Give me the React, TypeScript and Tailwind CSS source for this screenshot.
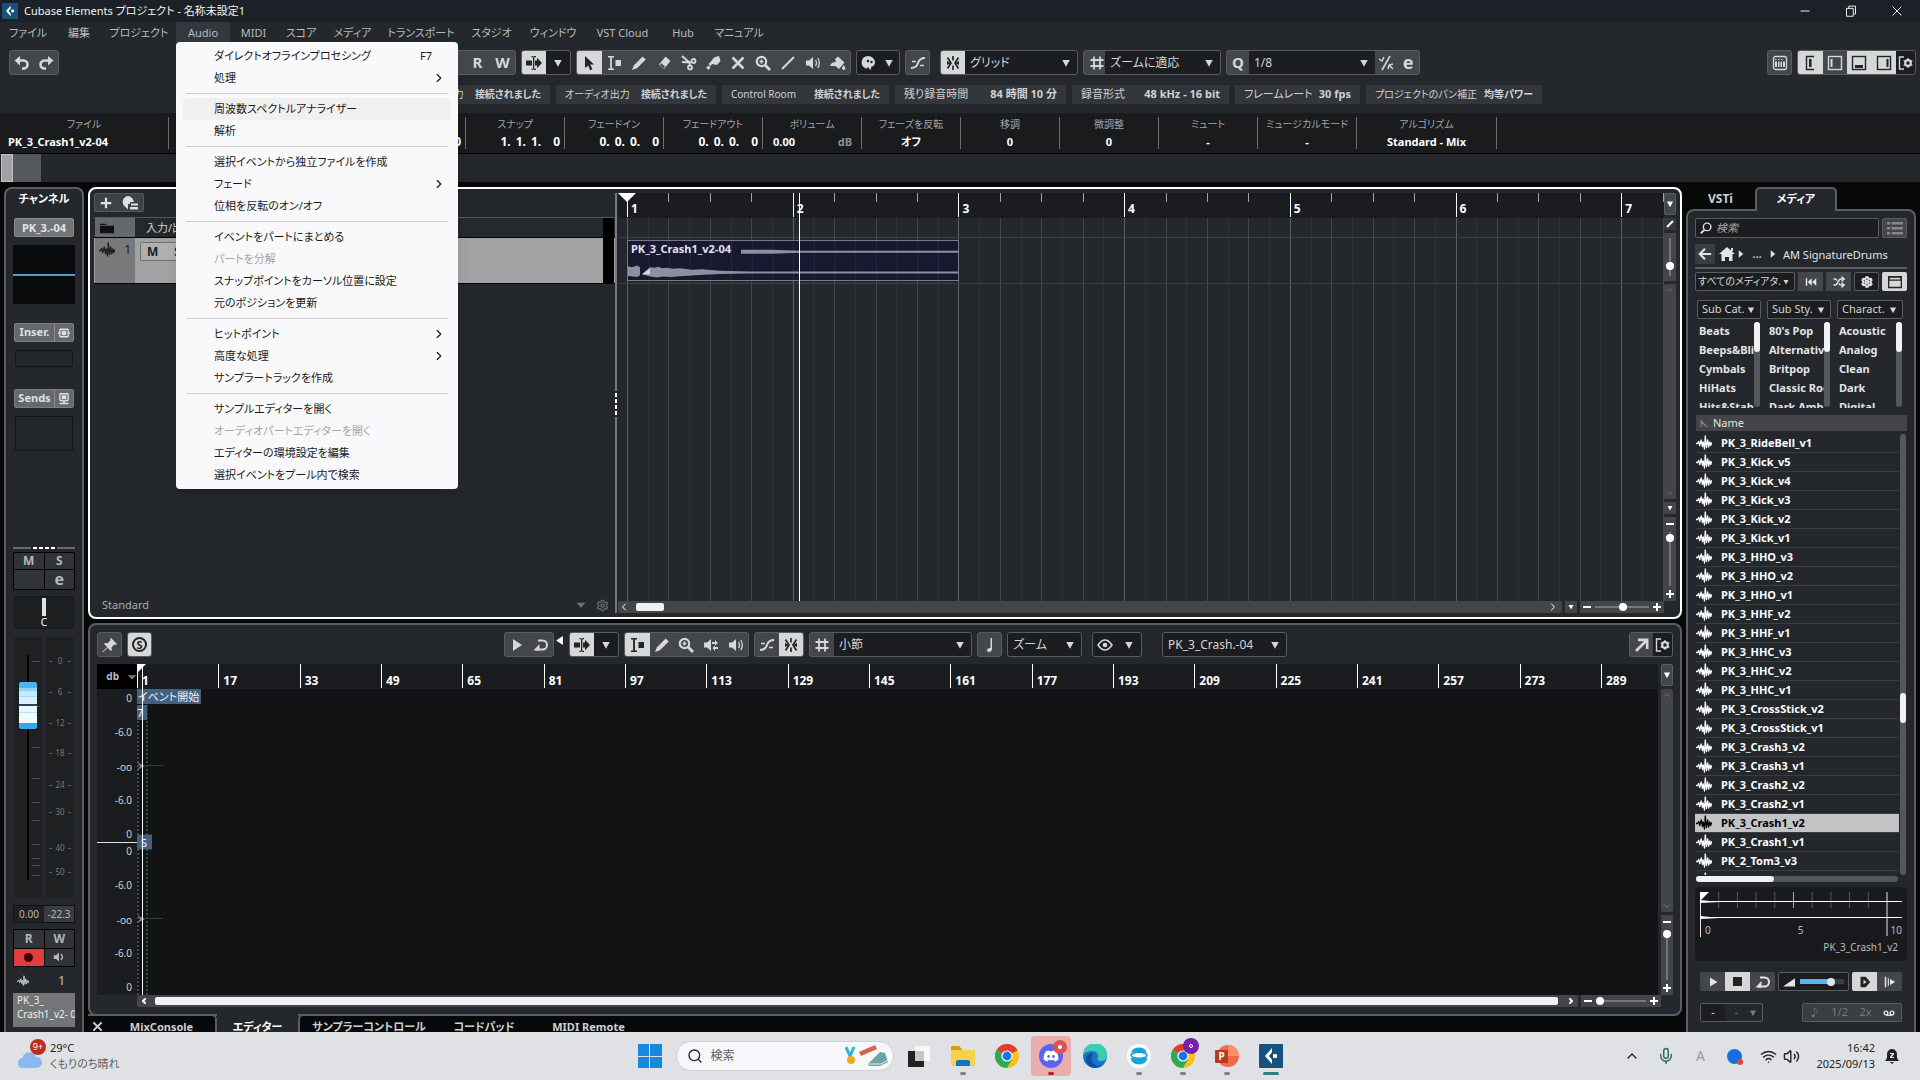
import React, { useState } from "react";
import clsx from "clsx";
import { FaDiscord } from "react-icons/fa6";
import {
  ChevronDown,
  ChevronRight,
  ChevronUp,
  ChevronLeft,
  Mic,
  Search,
  Settings,
  Shuffle,
  Volume2,
  Wifi,
} from "lucide-react";

type Glyph = { d?: string; children?: React.ReactNode; className?: string };

const Icon = ({ d, children, className = "size-4" }: Glyph) => (
  <svg viewBox="0 0 16 16" fill="currentColor" className={clsx("shrink-0", className)} aria-hidden>
    {d && <path d={d} />}
    {children}
  </svg>
);

const stroke = { fill: "none", stroke: "currentColor", strokeWidth: 1.8 };

const DOWN = "M3 4h10L8 13z";
const RANGE = "M2 1h6v1.600H5.900v10.800H8V15H2v-1.600h2.100V2.600H2zM9.500 5H15v6H9.500z";
const PENCIL = "M1 15l1.800-4.600 8.800-9L14.800 4.400 6 13.200z";
const SPEAKER = "M1 5.500h3L8 2v12l-4-3.500H1z";

const Wave = ({ className }: { className?: string }) => (
  <Icon className={className}>
    <path d="M0 8.500h1.500L2.700 6.500l1 4L5.200 5l1.300 6.500L7.200 7l1.300 7L9.300 1l1.200 11.500L11.700 5l1 7 1-5 1 3.500.8-2.500h.5" {...stroke} strokeWidth="1.300" strokeLinejoin="round" />
  </Icon>
);

const icons = {
  undo: <Icon><path d="M4 5.500h5.500a4 4 0 010 8H8" {...stroke} strokeWidth="2.600" /><path d="M.5 5.500L6 1v9.500z" /></Icon>,
  redo: <Icon><path d="M12 5.500H6.500a4 4 0 000 8H8" {...stroke} strokeWidth="2.600" /><path d="M15.500 5.500L10 1v9.500z" /></Icon>,
  autoscroll: <Icon d="M0 5.500h6v5H0zM9 5.500h2V2.800l5 5.200-5 5.200v-2.700H9zM5.500 1H7l.7 1 .7-1H10v1.200H8.300v11.600H10V15H8.400l-.7-1-.7 1H5.500v-1.200H7V2.200H5.500z" />,
  pointer: <Icon d="M4 1l9 8.500H9.200l2.200 4.800-2.200 1-2-4.800L4 13z" />,
  range: <Icon d={RANGE} />,
  pencil: <Icon d={PENCIL} />,
  eraser: <Icon><path d="M9.500 1.500l5 4.500-6.500 8-5-4.500z" /><path d="M5.200 8.200l4 3.500-1.500 1.700-3.600-3.400z" fill="#43464a" /></Icon>,
  scissors: <Icon><path d="M1 1l8 7M1 7l9 .5" {...stroke} strokeWidth="2" /><circle cx="12.500" cy="6" r="2" {...stroke} /><circle cx="9" cy="12.500" r="2" {...stroke} /><path d="M8 6l1 5" {...stroke} /></Icon>,
  glue: <Icon d="M9 2.500l5-1.500 1.500 5-3.500 4-5-1-1.500 2-2-2 2-2zM1 12.500l3-2 1.500 2-2 2.500z" />,
  mute: <Icon><path d="M2.500 2.500l11 11M13.500 2.500l-11 11" {...stroke} strokeWidth="2.600" /></Icon>,
  zoom: <Icon><circle cx="6.500" cy="6.500" r="4.700" {...stroke} strokeWidth="2.200" /><path d="M10 10l5 5" {...stroke} strokeWidth="2.800" /><path d="M6.500 4.500v4M4.500 6.500h4" {...stroke} strokeWidth="1.600" /></Icon>,
  line: <Icon><path d="M2 14L14 2" {...stroke} strokeWidth="2" /></Icon>,
  speaker: <Icon><path d={SPEAKER} /><path d="M10.500 5q2 3 0 6M12.800 3q3 5 0 10" {...stroke} strokeWidth="1.300" /></Icon>,
  scrub: <Icon><path d={SPEAKER} /><path d="M9 5h3V3l3 3-3 2.500V7H9zM15 10h-3V8.500L9.500 11l2.500 3v-2h3z" /></Icon>,
  bucket: <Icon d="M5 4l3-2.500 6.500 6L9 14 5.500 11H0q1-4 6-4zM13.500 10l2 3q0 2-1.700 2T12 13z" />,
  palette: <Icon><path d="M8 1a7 6.500 0 00-2 12.500q2 .5 1.500-2l3 3.500q1-1 .5-3 4-1 4-5A7 6.500 0 008 1z" /><circle cx="8" cy="6" r="1.300" fill="#1b1d20" /><circle cx="11.500" cy="7" r="1.200" fill="#1b1d20" /></Icon>,
  crossfade: <Icon><path d="M1 13q5.500 0 7-5t7-5" {...stroke} strokeWidth="2" /><path d="M2 6.500h4M10 10.500h4" {...stroke} strokeWidth="1.500" /></Icon>,
  snap: <Icon><path d="M8 1v4.500M8 10.500V15M2.500 2.500L6 8l-3.500 5.500M13.500 2.500L10 8l3.500 5.500" {...stroke} strokeWidth="1.700" /><path d="M2 6l4 2-4 2zM14 6l-4 2 4 2z" /></Icon>,
  hash: <Icon><path d="M5 1.500v13M11 1.500v13M1.500 5h13M1.500 11h13" {...stroke} strokeWidth="1.800" /></Icon>,
  quantize: <Icon><path d="M12 1L4 15" {...stroke} strokeWidth="1.600" /><path d="M1 4l3 2 2-4M10 14l1-4 4-1M11 10l4 4" {...stroke} strokeWidth="1.500" /></Icon>,
  keys: <Icon><rect x="1.500" y="1.500" width="13" height="13" rx="2" {...stroke} strokeWidth="1.300" /><path d="M3 4h1.500v1H3zM6 4h1.500v1H6zM9 4h1.500v1H9zM3 6.500h2V12H3zM6 6.500h1.500V12H6zM8.500 6.500H10V12H8.500zM11 6.500h2V12h-2z" /></Icon>,
  gearPanel: <Icon><path d="M6 2H1.500v12H6" {...stroke} strokeWidth="1.400" /><circle cx="10" cy="8" r="3" {...stroke} strokeWidth="1.800" /><path d="M10 3v10M5.600 5.500l8.800 5M5.600 10.500l8.800-5" {...stroke} strokeWidth="1.200" /><circle cx="10" cy="8" r="1.600" fill="#1b1d20" /></Icon>,
  play: <Icon d="M4 2l9 6-9 6z" />,
  loop: <Icon><path d="M5 3.500h4.500a4.500 4.500 0 010 9H3" {...stroke} strokeWidth="2" /><path d="M.5 13.500L6.500 7v6.500z" /></Icon>,
  note: <Icon d="M8.500 1H10v11.500q-.5 2.500-3.200 2.500-2.300-.2-1.800-2.200.8-2 3.500-1.800z" />,
  eye: <Icon><path d="M1 8q3.500-5 7-5t7 5q-3.500 5-7 5T1 8z" {...stroke} strokeWidth="1.500" /><circle cx="8" cy="8" r="2.300" /></Icon>,
  pin: <Icon d="M9 1l6 6-1.500 1-1.200-.4L9.500 10.500 9.800 13l-1 1L5.600 10.700 1 15.300l-.6-.6L5.200 10 2 7l1-1 2.600.2 2.900-2.900L8 2z" />,
  popout: <Icon><path d="M2 14L12 4" {...stroke} strokeWidth="2.600" /><path d="M4 1.500h10.500V12h-2.600V4.200H4z" /></Icon>,
};

/* ---------- small controls ---------- */

const Group = ({ className, children }: { className?: string; children: React.ReactNode }) => (
  <div className={clsx("flex h-[25px] shrink-0 overflow-hidden rounded-[3px] border border-[#5a5d60] bg-[#43464a]", className)}>
    {children}
  </div>
);

const Tool = ({ label, on, dark, className, children }: {
  label: string; on?: boolean; dark?: boolean; className?: string; children: React.ReactNode;
}) => (
  <button
    type="button"
    aria-label={label}
    className={clsx(
      "flex min-w-0 flex-1 items-center justify-center text-[15px] font-bold",
      on ? "bg-[#d6d7d7] text-[#222427]" : dark ? "bg-[#1b1d20] text-[#d6d7d7]" : "text-[#d6d7d7]",
      className,
    )}
  >
    {children}
  </button>
);

const Caret = ({ className = "size-3" }: { className?: string }) => <Icon d={DOWN} className={className} />;

const Drop = ({ label, value, className, small }: {
  label: string; value: string; className?: string; small?: boolean;
}) => (
  <div
    className={clsx(
      "flex min-w-0 items-center overflow-hidden bg-[#1b1d20] text-[#d6d7d7]",
      small ? "h-[19px] rounded-[2px] border border-[#5a5d60] pr-1" : "pr-[5px]",
      className,
    )}
  >
    <select
      aria-label={label}
      className={clsx("min-w-0 flex-1 appearance-none bg-transparent outline-none", small ? "pl-1 text-[11px]" : "pl-[5px] text-xs")}
    >
      <option>{value}</option>
    </select>
    <Caret className={small ? "size-[10px]" : "size-3"} />
  </div>
);

const V_RANGE =
  "min-h-0 w-3 flex-1 appearance-none [writing-mode:vertical-lr] [direction:rtl] bg-[linear-gradient(#75777a,#75777a)] bg-[length:2px_100%] bg-center bg-no-repeat [&::-webkit-slider-thumb]:size-2 [&::-webkit-slider-thumb]:appearance-none [&::-webkit-slider-thumb]:rounded-full [&::-webkit-slider-thumb]:bg-white";
const H_RANGE =
  "h-3 min-w-0 flex-1 appearance-none bg-[linear-gradient(#75777a,#75777a)] bg-[length:100%_2px] bg-center bg-no-repeat [&::-webkit-slider-thumb]:size-2 [&::-webkit-slider-thumb]:appearance-none [&::-webkit-slider-thumb]:rounded-full [&::-webkit-slider-thumb]:bg-white";

const HZoom = ({ label, value, className }: { label: string; value: number; className: string }) => (
  <div className={clsx("flex h-3 shrink-0 items-center gap-1 bg-[#434548] px-[3px] text-white", className)}>
    <button type="button" aria-label="縮小"><Icon className="size-2"><path d="M0 8h16" {...stroke} strokeWidth="4" /></Icon></button>
    <input type="range" aria-label={label} defaultValue={value} className={H_RANGE} />
    <button type="button" aria-label="拡大"><Icon className="size-2"><path d="M0 8h16M8 0v16" {...stroke} strokeWidth="4" /></Icon></button>
  </div>
);

const VZoom = ({ label, value, className }: { label: string; value: number; className: string }) => (
  <div className={clsx("flex w-3 shrink-0 flex-col items-center gap-1 bg-[#434548] py-[3px] text-white", className)}>
    <button type="button" aria-label="縮小"><Icon className="size-2"><path d="M0 8h16" {...stroke} strokeWidth="4" /></Icon></button>
    <input type="range" aria-label={label} defaultValue={value} className={V_RANGE} />
    <button type="button" aria-label="拡大"><Icon className="size-2"><path d="M0 8h16M8 0v16" {...stroke} strokeWidth="4" /></Icon></button>
  </div>
);

const VScroll = () => (
  <div className="flex min-h-0 w-3 flex-1 flex-col items-center justify-between rounded-[2px] bg-[#434548] py-px text-[#77797c]">
    <ChevronUp className="size-[10px]" />
    <ChevronDown className="size-[10px]" />
  </div>
);

/* ---------- header ---------- */

const menuBar = [
  ["ファイル", "w-14"], ["編集", "w-[46px]"], ["プロジェクト", "w-[74px]"], ["Audio", "w-[54px]"],
  ["MIDI", "w-[47px]"], ["スコア", "w-12"], ["メディア", "w-[55px]"], ["トランスポート", "w-[82px]"],
  ["スタジオ", "w-[59px]"], ["ウィンドウ", "w-16"], ["VST Cloud", "w-[75px]"], ["Hub", "w-[46px]"], ["マニュアル", "w-[66px]"],
];

type Entry = { text: string; key?: string; sub?: boolean; off?: boolean; hover?: boolean };

const audioMenu: Entry[][] = [
  [{ text: "ダイレクトオフラインプロセシング", key: "F7" }, { text: "処理", sub: true }],
  [{ text: "周波数スペクトルアナライザー", hover: true }, { text: "解析" }],
  [{ text: "選択イベントから独立ファイルを作成" }, { text: "フェード", sub: true }, { text: "位相を反転のオン/オフ" }],
  [{ text: "イベントをパートにまとめる" }, { text: "パートを分解", off: true }, { text: "スナップポイントをカーソル位置に設定" }, { text: "元のポジションを更新" }],
  [{ text: "ヒットポイント", sub: true }, { text: "高度な処理", sub: true }, { text: "サンプラートラックを作成" }],
  [{ text: "サンプルエディターを開く" }, { text: "オーディオパートエディターを開く", off: true }, { text: "エディターの環境設定を編集" }, { text: "選択イベントをプール内で検索" }],
];

const AudioMenu = () => (
  <div role="menu" className="absolute top-full left-0 z-20 w-[282px] rounded-[4px] bg-[#f9f9fb] py-[3px] text-[11px] text-[#191919] shadow-lg">
    {audioMenu.map((section, i) => (
      <div key={i} className={clsx("mx-[7px]", i > 0 && "mt-1 pt-[4px]")}>
        {i > 0 && <hr className="mx-[3px] -mt-1 mb-1 border-[#cfcfd0]" />}
        {section.map((item) => (
          <button
            key={item.text}
            type="button"
            role="menuitem"
            disabled={item.off}
            className={clsx(
              "flex h-[22px] w-full items-center rounded-[3px] pr-[9px] pl-[31px] text-left whitespace-nowrap",
              item.off && "text-[#a5a5a5]",
              item.hover && "bg-[#f0f0f1]",
            )}
          >
            <span className="flex-1">{item.text}</span>
            {item.key && <span className="pr-[10px]">{item.key}</span>}
            {item.sub && <ChevronRight className="-mr-1 size-[14px]" />}
          </button>
        ))}
      </div>
    ))}
  </div>
);

const CubaseMark = ({ className }: { className: string }) => (
  <svg viewBox="0 0 24 24" className={className} aria-hidden>
    <rect width="24" height="24" rx="1" fill="#17527c" />
    <path d="M13 4L6 12l7 8V15.500L9.800 12 13 8.500z" fill="#fff" />
    <circle cx="16" cy="12" r="2.200" fill="#fff" />
  </svg>
);

const TitleBar = () => (
  <div className="flex h-[22px] items-center bg-[#1b2127] pl-[2px] text-[11px] text-[#f2f2f2]">
    <CubaseMark className="size-4" />
    <h1 className="ml-[6px] flex-1">Cubase Elements プロジェクト - 名称未設定1</h1>
    <button type="button" aria-label="最小化" className="flex w-[46px] justify-center"><Icon className="size-3"><path d="M2 8h12" {...stroke} strokeWidth="1.300" /></Icon></button>
    <button type="button" aria-label="元に戻す" className="flex w-[46px] justify-center"><Icon className="size-3"><path d="M2 4.500h9V15H2zM5 4V1.500h9V12h-2" {...stroke} strokeWidth="1.300" /></Icon></button>
    <button type="button" aria-label="閉じる" className="flex w-[46px] justify-center"><Icon className="size-3"><path d="M2 2l12 12M14 2L2 14" {...stroke} strokeWidth="1.300" /></Icon></button>
  </div>
);

const MenuBar = () => {
  const [open, setOpen] = useState("Audio");
  return (
    <nav className="flex h-5 text-[11px] text-[#b9bbbd]">
      {menuBar.map(([name, width]) => (
        <div key={name} className={clsx("relative", width)}>
          <button
            type="button"
            onClick={() => setOpen(open === name ? "" : name)}
            className={clsx("h-full w-full pt-[2px] text-center whitespace-nowrap", open === name && "bg-[#34373d]")}
          >
            {name}
          </button>
          {open === name && name === "Audio" && <AudioMenu />}
        </div>
      ))}
    </nav>
  );
};

const ZoneIcon = ({ d }: { d: string }) => (
  <Icon><rect x="1.500" y="1.500" width="13" height="13" fill="none" stroke="currentColor" strokeWidth="1.400" /><path d={d} /></Icon>
);

const Toolbar = () => (
  <div className="mt-2 flex gap-[5px] pr-1 pl-[9px]">
    <Group className="w-[50px]">
      <Tool label="元に戻す">{icons.undo}</Tool>
      <Tool label="再実行">{icons.redo}</Tool>
    </Group>
    <Group className="ml-[372px] w-20 pl-7">
      <Tool label="Read">R</Tool>
      <Tool label="Write">W</Tool>
    </Group>
    <Group className="w-[50px]">
      <Tool label="自動スクロール" on>{icons.autoscroll}</Tool>
      <Tool label="自動スクロール設定" dark><Caret /></Tool>
    </Group>
    <Group className="w-[275px]">
      <Tool label="オブジェクトの選択" on>{icons.pointer}</Tool>
      <Tool label="範囲選択">{icons.range}</Tool>
      <Tool label="鉛筆">{icons.pencil}</Tool>
      <Tool label="消しゴム">{icons.eraser}</Tool>
      <Tool label="はさみ">{icons.scissors}</Tool>
      <Tool label="のり">{icons.glue}</Tool>
      <Tool label="ミュート">{icons.mute}</Tool>
      <Tool label="ズーム">{icons.zoom}</Tool>
      <Tool label="ライン">{icons.line}</Tool>
      <Tool label="再生">{icons.speaker}</Tool>
      <Tool label="カラー">{icons.bucket}</Tool>
    </Group>
    <Group className="w-11">
      <Tool label="カラーメニュー" dark>{icons.palette}</Tool>
      <Tool label="カラー設定" dark><Caret /></Tool>
    </Group>
    <Group className="w-[25px]"><Tool label="クロスフェード">{icons.crossfade}</Tool></Group>
    <Group className="ml-[5px] w-[138px]">
      <Tool label="スナップ" on className="max-w-6">{icons.snap}</Tool>
      <Drop label="スナップタイプ" value="グリッド" className="flex-1" />
    </Group>
    <Group className="w-[138px] bg-[#1b1d20] pl-[5px] text-[#d6d7d7]">
      <span className="flex items-center">{icons.hash}</span>
      <Drop label="グリッドタイプ" value="ズームに適応" className="flex-1" />
    </Group>
    <Group className="w-[194px]">
      <Tool label="クオンタイズ" className="max-w-6">Q</Tool>
      <Drop label="クオンタイズ値" value="1/8" className="w-[126px]" />
      <Tool label="連符">{icons.quantize}</Tool>
      <Tool label="クオンタイズパネル"><span className="pb-[2px] text-lg leading-none">e</span></Tool>
    </Group>
    <Group className="ml-auto w-[25px]"><Tool label="オンスクリーンキーボード">{icons.keys}</Tool></Group>
    <Group className="w-[119px]">
      <Tool label="インスペクター" on>
        <Icon><path d="M12 1.500H4.500v13H12" fill="none" stroke="currentColor" strokeWidth="1.400" /><path d="M7 4h2.500v8H7z" /></Icon>
      </Tool>
      <Tool label="左ゾーン"><ZoneIcon d="M3.500 4h2v8h-2z" /></Tool>
      <Tool label="下ゾーン" on><ZoneIcon d="M4 10h8v3H4z" /></Tool>
      <Tool label="右ゾーン" on><ZoneIcon d="M10.500 4h2v8h-2z" /></Tool>
      <Tool label="ウィンドウレイアウト" dark className="max-w-[19px]">{icons.gearPanel}</Tool>
    </Group>
  </div>
);

const status = [
  ["オーディオ入力", "接続されました", "w-40 text-[10px]"],
  ["オーディオ出力", "接続されました", "w-40 text-[10px]"],
  ["Control Room", "接続されました", "w-[167px] text-[10px]"],
  ["残り録音時間", "84 時間 10 分", "w-[171px] text-[11px]"],
  ["録音形式", "48 kHz - 16 bit", "w-[157px] text-[11px]"],
  ["フレームレート", "30 fps", "w-[125px] text-[11px]"],
  ["プロジェクトのパン補正", "均等パワー", "w-44 text-[10px]"],
];

const StatusLine = () => (
  <div className="mt-[10px] flex gap-[6px] pl-[390px] text-[#d0d1d2]">
    {status.map(([label, value, size]) => (
      <button key={label} type="button" className={clsx("flex h-[19px] items-center justify-between bg-[#33363a] px-[9px] whitespace-nowrap", size)}>
        <span>{label}</span>
        <span className="font-bold">{value}</span>
      </button>
    ))}
  </div>
);

const infoFields = [
  ["開始", "1. 1. 1. 0"], ["終了", "3. 1. 1. 0"], ["長さ", "2. 0. 0. 0"], ["スナップ", "1. 1. 1. 0"],
  ["フェードイン", "0. 0. 0. 0"], ["フェードアウト", "0. 0. 0. 0"], ["ボリューム", "0.00"],
  ["フェーズを反転", "オフ"], ["移調", "0"], ["微調整", "0"], ["ミュート", "-"], ["ミュージカルモード", "-"],
];

const Position = ({ value }: { value: string }) => (
  <span className="flex justify-end gap-[5px] pr-1 text-xs leading-5">
    {value.split(" ").map((part, i) => <span key={i} className={i === 3 ? "pl-[7px]" : undefined}>{part}</span>)}
  </span>
);

const InfoLine = () => (
  <div className="mt-[9px] flex h-[41px] border-b border-black bg-[#191b1d] py-1 text-[11px] text-white">
    <dl className="flex w-[169px] flex-col border-r border-[#6c6e70] text-center">
      <dt className="text-[10px] leading-[15px] text-[#a2a4a6]">ファイル</dt>
      <dd className="pl-2 text-left leading-5 font-bold">PK_3_Crash1_v2-04</dd>
    </dl>
    {infoFields.map(([label, value]) => (
      <dl key={label} className="flex w-[99px] flex-col border-r border-[#6c6e70] text-center">
        <dt className="text-[10px] leading-[15px] text-[#a2a4a6]">{label}</dt>
        <dd className="leading-5 font-bold">
          {label === "ボリューム" ? (
            <span className="flex justify-between pr-[9px] pl-[10px]">{value}<span className="text-[#8f9193]">dB</span></span>
          ) : value.includes(". ") ? <Position value={value} /> : value}
        </dd>
      </dl>
    ))}
    <dl className="flex w-[140px] flex-col border-r border-[#6c6e70] text-center">
      <dt className="text-[10px] leading-[15px] text-[#a2a4a6]">アルゴリズム</dt>
      <dd className="leading-5 font-bold">Standard - Mix</dd>
    </dl>
  </div>
);

/* ---------- channel strip ---------- */

const meterMarks: [string, number][] = [["0", 24], ["6", 55], ["12", 86], ["18", 116], ["24", 148], ["30", 175], ["40", 211], ["50", 235]];
const faderTicks = [24, 69, 110, 141, 165, 183, 207, 221, 228, 238];

const StripHead = ({ text, children }: { text: string; children: React.ReactNode }) => (
  <button type="button" className="mx-px flex h-[19px] items-center rounded-[2px] border border-[#7c7e80] bg-[#66696c] text-[11px] font-bold text-[#dfe0e0]">
    <span className="flex-1">{text}</span>
    <span className="flex h-full w-[19px] items-center justify-center border-l border-[#8a8c8e]">{children}</span>
  </button>
);

const ChannelStrip = () => (
  <aside className="flex w-20 shrink-0 flex-col rounded-t-lg border-2 border-b-0 border-[#5b5e61] bg-[#24272b] px-[7px]">
    <h2 className="h-5 text-center text-[11px] leading-5 font-bold text-white">チャンネル</h2>
    <button type="button" className="mx-px mt-[9px] h-[19px] rounded-[2px] border border-[#8a8c8e] bg-[#717476] text-[11px] leading-none font-bold text-[#e4e5e5]">PK_3.-04</button>
    <div className="mt-2 flex h-[59px] flex-col justify-center bg-[#090a0b]"><div className="h-[2px] bg-[#4f9ccb]" /></div>
    <div className="h-[19px]" />
    <StripHead text="Inser."><Icon className="size-3"><rect x="2.500" y="3" width="11" height="10" rx="1" {...stroke} /><path d="M5 5h6v6H5zM0 7h2v2H0zM14 7h2v2h-2z" /></Icon></StripHead>
    <div className="mx-[2px] mt-2 mb-[22px] h-[17px] rounded-[2px] border border-[#131416]" />
    <StripHead text="Sends"><Icon className="size-3"><rect x="2.500" y="1" width="11" height="9" rx="1" {...stroke} /><path d="M5 3h6v5H5zM7 10h2v4H7zM2 13h12v2H2z" /></Icon></StripHead>
    <div className="mx-[2px] mt-2 h-[35px] rounded-[2px] border border-[#131416]" />
    <div className="min-h-4 flex-1" />
    <div className="flex h-[2px] items-center gap-[2px]">
      <i className="h-[2px] flex-1 bg-[#67696c]" /><i className="h-[2px] w-1 bg-white" /><i className="h-[2px] w-1 bg-white" /><i className="h-[2px] w-1 bg-white" /><i className="h-[2px] w-1 bg-white" /><i className="h-[2px] flex-1 bg-[#67696c]" />
    </div>
    <div className="mt-[3px] grid h-[38px] grid-cols-2 gap-px border border-black bg-black text-xs font-bold text-[#b5b7b9] *:bg-[#303337]">
      <button type="button" className="leading-none">M</button>
      <button type="button" className="leading-none">S</button>
      <button type="button" aria-label="バイパス" />
      <button type="button" className="text-base leading-none">e</button>
    </div>
    <div className="mx-px mt-[6px] flex h-[33px] flex-col items-center rounded-[3px] border border-[#17181a] bg-[#1d1f20] pt-px text-[10px] leading-[10px] text-white">
      <i className="mb-px h-[18px] w-1 bg-[#dfe0e0]" />C
    </div>
    <div className="mx-px mt-2 flex h-[261px] gap-1">
      <div className="relative flex w-7 justify-center rounded-[3px] bg-[#1e2021] py-[18px]">
        {faderTicks.map((y) => <i key={y} className="absolute right-[2px] h-px w-2 bg-[#4c4e50]" style={{ top: y }} />)}
        <input
          type="range"
          aria-label="ボリューム"
          defaultValue={85}
          className="relative h-full w-[18px] appearance-none bg-[linear-gradient(#050505,#050505)] bg-[length:2px_100%] bg-center bg-no-repeat [direction:rtl] [writing-mode:vertical-lr] [&::-webkit-slider-thumb]:h-[47px] [&::-webkit-slider-thumb]:w-[18px] [&::-webkit-slider-thumb]:appearance-none [&::-webkit-slider-thumb]:rounded-[2px] [&::-webkit-slider-thumb]:bg-[linear-gradient(#4cb4f0_0_6px,#8fd3f7_6px_9px,#c9eafb_9px_14px,#a7dcf7_14px_15px,#d9f1fc_15px_22px,#2b4658_22px_24px,#e9f7fe_24px_30px,#b5e2f9_30px_31px,#f1faff_31px_41px,#35a8ec_41px)]"
        />
      </div>
      <div className="relative w-7 rounded-[3px] bg-[#1e2021] text-center text-[8px] text-[#77797b]">
        {meterMarks.map(([n, y]) => (
          <span key={n} className="absolute inset-x-[3px] flex h-3 -translate-y-1/2 items-center justify-between" style={{ top: y }}>
            <i className="h-px w-[3px] bg-[#5b5d60]" />{n}<i className="h-px w-[3px] bg-[#5b5d60]" />
          </span>
        ))}
      </div>
    </div>
    <div className="mt-[7px] grid h-[18px] grid-cols-2 border border-[#111] text-center text-[10px] leading-4 text-[#b5b7b9]">
      <span className="bg-[#1e2021]">0.00</span><span className="bg-[#3a3d40]">-22.3</span>
    </div>
    <div className="mt-[6px] grid h-[38px] grid-cols-2 gap-px border border-black bg-black text-xs font-bold text-[#b5b7b9] *:bg-[#303337]">
      <button type="button" className="leading-none">R</button>
      <button type="button" className="leading-none">W</button>
      <button type="button" aria-label="録音可能" className="flex items-center justify-center bg-[#e23d3d]!"><i className="size-[9px] rounded-full bg-[#3a0505]" /></button>
      <button type="button" aria-label="モニタリング" className="flex items-center justify-center"><Icon className="size-3"><path d={SPEAKER} /><path d="M10.500 4q4 4 0 8" {...stroke} /></Icon></button>
    </div>
    <div className="mt-1 flex h-[19px] items-center justify-between px-1 pr-[10px] text-xs text-[#c4c5c7]">
      <Wave className="size-3" />1
    </div>
    <div className="mt-[3px] mb-[5px] h-[34px] overflow-hidden bg-[#737577] pl-1 text-[10px] leading-[14px] whitespace-nowrap text-[#eee]">
      PK_3_<br />Crash1_v2- 04
    </div>
  </aside>
);

/* ---------- project zone ---------- */

const BAR = 165.7;
const eighths = Array.from({ length: 51 }, (_, i) => i);

const TrackList = () => (
  <section className="flex w-[521px] shrink-0 flex-col">
    <div className="flex h-[25px] items-start border-b border-[#55585a]">
      <div className="flex h-[19px] w-[50px] items-center justify-around rounded-[2px] border border-[#55585b] bg-[#3e4145] text-[#dfe0e0]">
        <button type="button" aria-label="トラックを追加"><Icon className="size-3"><path d="M8 1v14M1 8h14" {...stroke} strokeWidth="3" /></Icon></button>
        <button type="button" aria-label="トラックプリセット"><Icon d="M6 1a6 6 0 014.500 2.500L12 7H8v2H6v5.500L3.500 12A6 6 0 016 1zM9 8.500h7v2H9zM8 12h8v2.500H8z" /></button>
      </div>
    </div>
    <div className="flex h-5 border-b border-black bg-[#25282c] pl-px text-[11px] text-[#d0d1d2]">
      <div className="flex w-10 items-center bg-[#66696c] pl-1 text-[#111]"><Icon d="M0 3h7v1.500H0zM0 5.500h16V14H0z" className="h-[14px] w-4" /></div>
      <span className="flex-1 pl-[11px] leading-[19px]">入力/出力チャンネル</span>
      <i className="mr-px w-[11px] bg-black" />
    </div>
    <div className="flex h-[46px] border-b border-black bg-[#a0a2a4] pl-px text-[#1b1d1f]">
      <div className="flex w-10 justify-between bg-[#77797b] pt-1 pr-1 pl-1"><Wave /><span className="text-xs leading-4">1</span></div>
      <div className="mt-1 ml-[5px] flex h-[19px] w-20 items-center gap-4 rounded-[2px] border border-[#6d6f71] bg-[#aeb0b1] px-[6px] text-xs font-bold">
        <button type="button">M</button>
        <button type="button">S</button>
      </div>
      <i className="mr-px ml-auto w-[11px] bg-black" />
    </div>
    <div className="flex-1" />
    <div className="flex h-4 items-center pr-[6px] pl-2 text-[11px] text-[#a9abad]">
      <span className="flex-1">Standard</span>
      <Icon d="M2 5h12l-6 7z" className="mr-[9px] size-3 text-[#6c6e71]" />
      <Settings className="size-[13px]" strokeWidth={2.5} color="#6c6e71" />
    </div>
  </section>
);

const Clip = () => (
  <div className="absolute top-[22px] left-[9px] h-[41px] w-[332px] overflow-hidden border border-[#77788a] bg-[#18182e] pl-[3px] text-[11px] leading-[15px] font-bold text-[#e6e4f4]">
    <svg viewBox="0 0 330 40" preserveAspectRatio="none" className="absolute inset-0 size-full" fill="#8f8f9d">
      {Array.from({ length: 15 }, (_, i) => <path key={i} d={`M${(i + 1) * 20.7} 0v40`} stroke="#262750" />)}
      <path d="M113 9h30l30 1h157v2H173l-30 1h-30z" />
      <path d="M0 26l4 1 5-2 3 2v8l-3 2-9-1zM14 34l8-7 5 .5 3-1 4 1.500 5-.5 6 1 7-.5 12 1.500 10-.5 18 1.500 30 .8h210v2H120l-28 .6-20 1-17 1-12 1-8-.5-6 1-7-1z" />
      <path d="M14 34L22 28v6z" fill="#d6d5e2" />
    </svg>
    <span className="relative">PK_3_Crash1_v2-04</span>
  </div>
);

const Arrange = () => (
  <section className="flex min-w-0 flex-1 flex-col">
    <div className="flex min-h-0 flex-1">
      <div className="relative flex min-w-0 flex-1 flex-col overflow-hidden">
        <div className="relative h-[25px] shrink-0 bg-[#1b1c1f] text-xs font-bold text-white">
          {eighths.filter((i) => i % 2 === 0).map((i) => (
            <React.Fragment key={i}>
              <i className={clsx("absolute top-0 w-px", i % 8 === 0 ? "h-6 bg-white" : "h-[9px] bg-[#a0a1a3]")} style={{ left: 9 + (i * BAR) / 8 }} />
              {i % 8 === 0 && <span className="absolute bottom-px leading-4" style={{ left: 13 + (i * BAR) / 8 }}>{i / 8 + 1}</span>}
            </React.Fragment>
          ))}
          <svg viewBox="0 0 18 9" className="absolute top-0 left-0 h-[9px] w-[18px]"><path d="M0 0h18L9 9z" fill="#fff" /></svg>
        </div>
        <div className="relative flex-1 bg-[#24272b]">
          {eighths.map((i) => (
            <i key={i} className={clsx("absolute inset-y-0 w-px", i % 8 === 0 ? "bg-[#5d6062]" : i % 2 === 0 ? "bg-[#45484b]" : "bg-[#303336]")} style={{ left: 9 + (i * BAR) / 8 }} />
          ))}
          <i className="absolute inset-x-0 top-[19px] h-px bg-[#3d4043]" />
          <i className="absolute inset-x-0 top-[65px] h-px bg-[#3d4043]" />
          <Clip />
        </div>
        <i className="absolute inset-y-0 left-[181px] w-px bg-white" />
      </div>
      <div className="flex w-3 shrink-0 flex-col gap-[3px] text-white">
        <button type="button" aria-label="ルーラー表示" className="flex h-[22px] shrink-0 items-center justify-center rounded-[2px] border border-[#5a5d60] bg-[#43464a]"><Caret className="size-[10px]" /></button>
        <button type="button" aria-label="編集" className="flex h-3 shrink-0 items-center justify-center bg-[#36393c]"><Icon className="size-2"><path d="M2 14L14 2" {...stroke} strokeWidth="4" /></Icon></button>
        <div className="flex h-12 shrink-0 flex-col bg-[#434548] py-[5px]"><input type="range" aria-label="波形ズーム" defaultValue={20} className={V_RANGE} /></div>
        <VScroll />
        <button type="button" aria-label="縦ズームプリセット" className="flex h-3 shrink-0 items-center justify-center bg-[#434548]"><Caret className="size-2" /></button>
        <VZoom label="縦ズーム" value={96} className="h-[84px]" />
      </div>
    </div>
    <div className="flex h-3 gap-[3px] pr-3 text-white">
      <div className="flex min-w-0 flex-1 items-center rounded-[2px] bg-[#434548]">
        <ChevronLeft className="size-3" />
        <i className="ml-[6px] h-2 w-7 rounded-[2px] bg-[#f0f1f2]" />
        <ChevronRight className="mr-[3px] ml-auto size-3" />
      </div>
      <button type="button" aria-label="横ズームプリセット" className="flex w-3 items-center justify-center bg-[#434548]"><Caret className="size-2" /></button>
      <HZoom label="横ズーム" value={52} className="w-[84px]" />
    </div>
  </section>
);

/* ---------- sample editor ---------- */

const dbScale: [string, number][] = [["0", 9], ["-6.0", 43], ["-oo", 78], ["-6.0", 111], ["0", 145], ["0", 162], ["-6.0", 196], ["-oo", 231], ["-6.0", 264], ["0", 298]];
const editorBars = Array.from({ length: 19 }, (_, i) => i);

const Editor = () => (
  <section className="flex min-h-0 flex-1 flex-col gap-[7px] rounded-lg border-2 border-[#5b5e61] bg-[#24272b] p-[7px]">
    <div className="flex gap-[5px]">
      <Group className="w-[25px]"><Tool label="固定">{icons.pin}</Tool></Group>
      <Group className="w-[25px]">
        <Tool label="ソロ" on><span className="flex size-[15px] items-center justify-center rounded-full border-2 border-[#222427] text-[11px] leading-none">S</span></Tool>
      </Group>
      <Group className="ml-[347px] w-[50px]"><Tool label="試聴">{icons.play}</Tool><Tool label="ループ">{icons.loop}</Tool></Group>
      <Icon d="M14 0v16L2 8z" className="mt-1 -ml-1 size-[9px] self-start text-white" />
      <Group className="w-[50px]"><Tool label="自動スクロール" on>{icons.autoscroll}</Tool><Tool label="自動スクロール設定" dark><Caret /></Tool></Group>
      <Group className="w-[125px]">
        <Tool label="範囲選択" on>{icons.range}</Tool>
        <Tool label="波形の描画">{icons.pencil}</Tool>
        <Tool label="ズーム">{icons.zoom}</Tool>
        <Tool label="スクラブ">{icons.scrub}</Tool>
        <Tool label="再生">{icons.speaker}</Tool>
      </Group>
      <Group className="w-[50px]"><Tool label="ゼロクロス">{icons.crossfade}</Tool><Tool label="スナップ" on>{icons.snap}</Tool></Group>
      <Group className="w-[163px]">
        <Tool label="グリッド" className="max-w-6">{icons.hash}</Tool>
        <Drop label="グリッド間隔" value="小節" className="flex-1" />
      </Group>
      <Group className="w-[25px]"><Tool label="音符">{icons.note}</Tool></Group>
      <Group className="w-[75px]"><Drop label="ズーム" value="ズーム" className="flex-1" /></Group>
      <Group className="ml-[5px] w-[50px]"><Tool label="表示" dark>{icons.eye}</Tool><Tool label="表示設定" dark><Caret /></Tool></Group>
      <Group className="ml-[15px] w-[125px]"><Drop label="編集中のイベント" value="PK_3_Crash.-04" className="flex-1" /></Group>
      <Group className="ml-auto w-11"><Tool label="別ウィンドウで開く">{icons.popout}</Tool><Tool label="設定" dark className="max-w-[19px]">{icons.gearPanel}</Tool></Group>
    </div>
    <div className="flex min-h-0 flex-1">
      <div className="flex min-w-0 flex-1 flex-col">
        <div className="flex min-h-0 flex-1 pr-[3px]">
          <div className="flex w-10 shrink-0 flex-col">
            <div className="flex h-[25px] shrink-0 items-center justify-end gap-2 bg-black text-[10px] font-bold text-[#b9b9d0]">db <Icon d="M1 5h14l-7 7z" className="size-[10px] text-[#77797c]" /></div>
            <div className="relative flex-1 bg-[#1a1c1f] text-[10px] leading-3 text-[#cfd0d2]">
              {dbScale.map(([t, y]) => <span key={y} className="absolute right-[5px] -translate-y-1/2" style={{ top: y }}>{t}</span>)}
              <i className="absolute inset-x-0 top-1/2 h-px bg-[#e3e3e4]" />
            </div>
          </div>
          <div className="relative flex min-w-0 flex-1 flex-col overflow-hidden">
            <div className="relative h-[25px] shrink-0 bg-[#1b1c1f] text-xs font-bold text-white">
              {editorBars.map((i) => (
                <React.Fragment key={i}>
                  <i className="absolute top-0 h-6 w-px bg-white" style={{ left: i * 81.33 }} />
                  <span className="absolute bottom-0 leading-4" style={{ left: 5 + i * 81.33 }}>{i * 16 + 1}</span>
                </React.Fragment>
              ))}
              <svg viewBox="0 0 9 9" className="absolute top-0 left-0 size-[9px]"><path d="M0 0h9L0 9z" fill="#fff" /></svg>
            </div>
            <div className="relative flex-1 bg-[#121315] text-[11px] leading-[15px] text-[#eef2f8]">
              <i className="absolute inset-y-0 left-0 border-l-2 border-dotted border-[#464a58]" />
              <i className="absolute inset-y-0 left-[9px] border-l-2 border-dotted border-[#34483f]" />
              {["top-1/4", "top-3/4"].map((pos) => (
                <div key={pos} className={clsx("absolute left-0 flex w-[26px] -translate-y-1/2 items-center text-[#77797c]", pos)}>
                  <Icon d="M0 0l16 8L0 16l6-8z" className="size-2" /><i className="h-px flex-1 bg-[#3a3c3f]" />
                </div>
              ))}
              <span className="absolute top-0 left-0 w-16 bg-[#43607f] pl-px whitespace-nowrap">イベント開始</span>
              <span className="absolute top-4 left-0 w-[10px] bg-[#43607f]">7</span>
              <span className="absolute top-1/2 left-0 w-[15px] -translate-y-1/2 bg-[#43607f] pl-1">S</span>
            </div>
            <i className="absolute inset-y-0 left-[5px] w-px bg-white" />
          </div>
        </div>
        <div className="flex h-3 gap-[3px] pl-10 text-white">
          <div className="flex min-w-0 flex-1 items-center rounded-[2px] bg-[#434548] px-[3px]">
            <ChevronLeft className="size-2" strokeWidth={6} />
            <i className="mr-[9px] ml-[7px] h-2 flex-1 rounded-[2px] bg-[#f0f1f2]" />
            <ChevronRight className="size-2" strokeWidth={6} />
          </div>
          <HZoom label="エディター横ズーム" value={0} className="w-20" />
        </div>
      </div>
      <div className="mb-3 flex w-3 shrink-0 flex-col gap-[3px] text-white">
        <button type="button" aria-label="ルーラー形式" className="flex h-[22px] shrink-0 items-center justify-center rounded-[2px] border border-[#5a5d60] bg-[#43464a]"><Caret className="size-[10px]" /></button>
        <VScroll />
        <VZoom label="エディター縦ズーム" value={100} className="h-20" />
      </div>
    </div>
  </section>
);

const ZoneTabs = () => (
  <div role="tablist" className="relative -mt-[2px] flex h-[18px] shrink-0 overflow-hidden text-[11px] leading-[22px] font-bold whitespace-nowrap text-[#cfd0d1] *:shrink-0">
    <button type="button" aria-label="ゾーンを閉じる" className="flex w-6 items-center border-t-2 border-[#5b5e61] bg-[#08090a] pt-1 pl-1"><Icon className="size-[11px]"><path d="M2 2l12 12M14 2L2 14" {...stroke} strokeWidth="3" /></Icon></button>
    <button type="button" role="tab" className="h-6 w-[105px] rounded-tr-[5px] border-t-2 border-r-2 border-[#5b5e61] bg-[#08090a] pr-1">MixConsole</button>
    <button type="button" role="tab" aria-selected className="h-6 w-[81px] bg-[#24272b] pt-[2px] text-white">エディター</button>
    <button type="button" role="tab" className="h-6 w-[140px] rounded-tl-[5px] border-t-2 border-l-2 border-[#5b5e61] bg-[#08090a]">サンプラーコントロール</button>
    <button type="button" role="tab" className="h-6 w-[92px] pt-[2px]">コードパッド</button>
    <button type="button" role="tab" className="h-6 w-[117px] pt-[2px]">MIDI Remote</button>
  </div>
);

/* ---------- right zone ---------- */

const filters = [
  { name: "Sub Cat.", width: "w-16", items: ["Beats", "Beeps&Bli", "Cymbals", "HiHats", "Hits&Stabs"] },
  { name: "Sub Sty.", width: "w-16", items: ["80's Pop", "Alternative", "Britpop", "Classic Rock", "Dark Ambient"] },
  { name: "Charact.", width: "w-[66px]", items: ["Acoustic", "Analog", "Clean", "Dark", "Digital"] },
];

const files = [
  "RideBell_v1", "Kick_v5", "Kick_v4", "Kick_v3", "Kick_v2", "Kick_v1", "HHO_v3", "HHO_v2", "HHO_v1", "HHF_v2", "HHF_v1",
  "HHC_v3", "HHC_v2", "HHC_v1", "CrossStick_v2", "CrossStick_v1", "Crash3_v2", "Crash3_v1", "Crash2_v2", "Crash2_v1",
  "Crash1_v2", "Crash1_v1",
].map((n) => `PK_3_${n}`).concat("PK_2_Tom3_v3", "PK_2_Tom3_v2");

const SmallBtn = ({ label, className, children }: { label: string; className?: string; children: React.ReactNode }) => (
  <button type="button" aria-label={label} className={clsx("flex h-[19px] w-[25px] items-center justify-center", className)}>{children}</button>
);

const MediaRack = () => {
  const [picked, setPicked] = useState("PK_3_Crash1_v2");
  return (
    <aside className="flex w-[230px] shrink-0 flex-col">
      <div role="tablist" className="relative -mb-[2px] flex h-6 text-xs font-bold">
        <button type="button" role="tab" className="w-[69px] text-[#d0d1d2]">VSTi</button>
        <button type="button" role="tab" aria-selected className="w-[82px] rounded-t-[5px] border-2 border-b-0 border-[#5b5e61] bg-[#24272b] pb-[2px] text-[11px] text-white">メディア</button>
      </div>
      <div className="flex min-h-0 flex-1 flex-col rounded-t-lg border-2 border-b-0 border-[#5b5e61] bg-[#24272b] px-[7px] pt-[7px] text-[#e3e4e5]">
        <div className="flex gap-[3px]">
          <label className="flex h-5 min-w-0 flex-1 items-center gap-1 rounded-[2px] border border-[#5a5d60] bg-[#1b1d20] px-1">
            <Icon className="size-3"><circle cx="9.500" cy="6.500" r="5" {...stroke} /><path d="M6 10.500L1 15" {...stroke} strokeWidth="2.500" /></Icon>
            <input aria-label="検索" placeholder="検索" className="min-w-0 flex-1 bg-transparent text-[11px] italic outline-none placeholder:text-[#a2a4a6]" />
          </label>
          <button type="button" aria-label="リスト表示" className="flex h-5 w-[25px] items-center justify-center rounded-[2px] border border-[#5a5d60] bg-[#43464a] text-[#85878a]">
            <Icon d="M0 2h3v2.500H0zM4.500 2H16v2.500H4.500zM0 7h3v2.500H0zM4.500 7H16v2.500H4.500zM0 12h3v2.500H0zM4.500 12H16v2.500H4.500z" />
          </button>
        </div>
        <div className="mt-[6px] flex h-[25px] items-start border-b-2 border-[#5b5e61] text-xs">
          <button type="button" aria-label="戻る" className="flex size-5 items-center justify-center rounded-[2px] bg-[#3a3d41]"><Icon className="size-[14px]"><path d="M15 8H3M8 2L2 8l6 6" {...stroke} strokeWidth="2.400" /></Icon></button>
          <a href="#home" aria-label="ホーム" className="ml-1 pt-[2px]"><Icon d="M8 1l8 7h-2.500v7H10v-4H6v4H2.500V8H0zM12 2h2v3h-2z" /></a>
          <Icon d="M5 3l6 5-6 5z" className="mt-1 size-3" />
          <span className="w-5 text-center leading-5">...</span>
          <Icon d="M5 3l6 5-6 5z" className="mt-1 size-3" />
          <a href="#drums" className="ml-1 text-[11px] leading-[21px] whitespace-nowrap">AM SignatureDrums</a>
        </div>
        <div className="mt-[3px] flex gap-[3px]">
          <Drop small label="メディアタイプ" value="すべてのメディアタ." className="w-[100px] [&>select]:pl-[2px] [&>select]:text-[10px] [&>svg]:size-2" />
          <SmallBtn label="先頭へ" className="bg-[#43464a]"><Icon d="M1 3h2v10H1zM9 3v10L3.500 8zM15 3v10L9.500 8z" className="size-3" /></SmallBtn>
          <SmallBtn label="シャッフル" className="bg-[#43464a]"><Shuffle className="size-3" strokeWidth={3} /></SmallBtn>
          <SmallBtn label="設定" className="rounded-[2px] border border-[#5a5d60] bg-[#1b1d20]"><Settings className="size-3" strokeWidth={4} /></SmallBtn>
          <SmallBtn label="フィルター" className="rounded-[2px] bg-[#d6d7d7] text-[#222427]"><Icon d="M0 1h16v14H0zM1.500 6.500v7h13v-7zM2 3v2h12V3z" className="size-[14px] [&_path]:[fill-rule:evenodd]" /></SmallBtn>
        </div>
        <div className="mt-[9px] flex gap-[6px] pl-[2px]">
          {filters.map((f) => (
            <div key={f.name} className={f.width}>
              <Drop small label={f.name} value={f.name} />
              <div className="mt-[2px] flex h-[87px] overflow-hidden">
                <ul className="min-w-0 flex-1 overflow-hidden pl-[2px] text-[11px] leading-[19px] font-bold whitespace-nowrap">
                  {f.items.map((t) => <li key={t}>{t}</li>)}
                </ul>
                <div className="mt-px mr-px h-[85px] w-[6px] rounded-full bg-[#55585b]"><div className="h-[30px] rounded-full bg-[#f0f1f2]" /></div>
              </div>
            </div>
          ))}
        </div>
        <div className="mt-[7px] ml-px flex h-4 items-center gap-1 bg-[#434548] pl-1 text-[11px]">
          <Icon d="M1 1l13 13h-3L3 7v7H1z" className="size-[9px] text-[#85878a]" />Name
        </div>
        <div className="mt-[3px] flex min-h-0 flex-1">
          <ul className="min-w-0 flex-1 overflow-hidden text-[11px] font-bold text-white">
            {files.map((f) => (
              <li key={f} className="border-b border-[#3b3e41]">
                <button
                  type="button"
                  onClick={() => setPicked(f)}
                  className={clsx("flex h-[18px] w-full items-center gap-[9px] pl-px", f === picked && "bg-[#c3c4c5] text-black")}
                >
                  <Wave />{f}
                </button>
              </li>
            ))}
          </ul>
          <div className="mr-px ml-px w-[6px] rounded-full bg-[#55585b] pt-[259px]"><div className="h-[30px] rounded-full bg-[#f0f1f2]" /></div>
        </div>
        <div className="mt-px mr-[9px] ml-px h-[6px] rounded-full bg-[#55585b]"><div className="h-full w-[78px] rounded-full bg-[#f0f1f2]" /></div>
        <div className="mt-[5px] h-[74px] rounded-[4px] bg-[#191a1d] px-[5px] pt-[5px] text-[10px] text-[#b9bbbd]">
          <svg viewBox="0 0 202 45" preserveAspectRatio="none" className="-mb-[14px] h-[45px] w-full">
            {Array.from({ length: 9 }, (_, i) => <path key={i} d={`M${(i + 1) * 18.7} 0v16`} stroke={i === 4 ? "#b0b0b0" : "#55585b"} />)}
            <path d="M.5 0v45M187 0v44" stroke="#e3e4e5" />
            <path d="M0 9.500h202M0 25.500h202" stroke="#fff" />
            <path d="M0 0h9L0 9zM0 8l20 2-20 1zM0 24l20 2-20 1z" fill="#fff" />
          </svg>
          <div className="flex justify-between pl-[5px] leading-[14px]"><span>0</span><span>5</span><span>10</span></div>
          <p className="pt-[2px] pr-1 text-right leading-4">PK_3_Crash1_v2</p>
        </div>
        <div className="mt-[11px] flex gap-[3px] pr-[5px] pl-[5px]">
          <div className="flex overflow-hidden rounded-[2px] bg-[#43464a]">
            <SmallBtn label="再生"><Icon d="M4 2l10 6-10 6z" className="size-3" /></SmallBtn>
            <SmallBtn label="停止" className="bg-[#d6d7d7] text-[#222427]"><i className="size-[9px] bg-current" /></SmallBtn>
            <SmallBtn label="ループ">{icons.loop}</SmallBtn>
          </div>
          <div className="flex w-[71px] items-center gap-[5px] rounded-[2px] border border-[#5a5d60] bg-[#1b1d20] px-1">
            <Icon d="M0 14L16 3v11z" className="size-3" />
            <input
              type="range"
              aria-label="試聴レベル"
              defaultValue={74}
              className="h-2 min-w-0 flex-1 appearance-none bg-[linear-gradient(90deg,#5fb2ea_70%,#3d4043_70%)] bg-[length:100%_5px] bg-center bg-no-repeat [&::-webkit-slider-thumb]:size-2 [&::-webkit-slider-thumb]:appearance-none [&::-webkit-slider-thumb]:rounded-full [&::-webkit-slider-thumb]:bg-[#e3e4e5]"
            />
          </div>
          <div className="flex overflow-hidden rounded-[2px] bg-[#43464a]">
            <SmallBtn label="自動再生" className="bg-[#d6d7d7] text-[#222427]"><Icon d="M2 1h7l6 7-6 7H2zM6 5v6l4-3z" className="size-3 [&_path]:[fill-rule:evenodd]" /></SmallBtn>
            <SmallBtn label="ビートに合わせる"><Icon d="M1 1h2v14H1zM5 3h1.500v10H5zM8 4l7 4-7 4z" className="size-3" /></SmallBtn>
          </div>
        </div>
        <div className="mt-3 mb-[10px] flex justify-between px-[5px] text-[11px] text-[#77797c]">
          <div className="flex h-[19px] w-[63px] items-center justify-between rounded-[2px] border border-[#5a5d60] pr-1">
            <span className="flex h-full w-6 items-center justify-center bg-[#1b1d20] text-[#e3e4e5]">-</span><span>-</span><Caret className="size-[10px]" />
          </div>
          <div className="flex h-[19px] w-[100px] items-center justify-around rounded-[2px] border border-[#5a5d60] bg-[#3a3d41]">
            <span>♪</span><span>1/2</span><span>2x</span>
            <Icon className="size-3 text-[#e3e4e5]"><circle cx="4" cy="8" r="2.500" {...stroke} /><circle cx="12" cy="8" r="2.500" {...stroke} /><path d="M4 11h8" {...stroke} /></Icon>
          </div>
        </div>
      </div>
    </aside>
  );
};

/* ---------- taskbar ---------- */

const Chrome = () => (
  <svg viewBox="0 0 24 24" className="size-6">
    <circle cx="12" cy="12" r="12" fill="#fbc116" />
    <path d="M12 12L1.600 6A12 12 0 0122.400 6z" fill="#e33b2e" />
    <path d="M1.600 6A12 12 0 0012 24l5.200-9L12 12z" fill="#2da94f" />
    <path d="M22.400 6H12v6z" fill="#e33b2e" />
    <circle cx="12" cy="12" r="5.600" fill="#fff" />
    <circle cx="12" cy="12" r="4.400" fill="#1a73e8" />
  </svg>
);

const apps: { name: string; art: React.ReactNode; mark?: string; lit?: boolean }[] = [
  { name: "タスクビュー", art: <svg viewBox="0 0 24 24" className="size-6"><path d="M1 7h16v16H1z" fill="#222" /><path d="M8 2h15v15H8z" fill="#fff" opacity=".75" /></svg> },
  { name: "エクスプローラー", mark: "w-[6px] bg-[#7d8083]", art: <svg viewBox="0 0 24 24" className="size-6"><path d="M0 3q0-1 1-1h7l3 3v5H0z" fill="#d9981b" /><path d="M0 6h23q1 0 1 1v14q0 1-1 1H1q-1 0-1-1z" fill="#fcd04e" /><path d="M5 22v-4q0-2 2-2h10q2 0 2 2v4z" fill="#1673c4" /></svg> },
  { name: "Chrome", art: <Chrome /> },
  { name: "Discord", lit: true, mark: "w-[6px] bg-[#b3261e]", art: <span className="relative flex size-6 items-center justify-center rounded-full bg-[#5865f2]"><FaDiscord className="size-4 text-white" /><i className="absolute -top-1 -right-1 flex size-[14px] items-center justify-center rounded-full bg-[#dc5450]"><i className="size-1 rounded-full bg-white" /></i></span> },
  { name: "Edge", art: <svg viewBox="0 0 24 24" className="size-6"><circle cx="12" cy="12" r="12" fill="#1b74c9" /><path d="M0 11A12 12 0 0124 11q0 6-6 6-4 0-3.500-3 1-1 .5-3-1-4-6-4-6 0-9 4z" fill="#3ccab4" /><path d="M9 12q-2 8 6 10 4 .5 7-3A12 12 0 018 23Q1 18 4 12q3-4 7-3-2 1-2 3z" fill="#0f4f9e" /></svg> },
  { name: "メッセージ", mark: "w-[6px] bg-[#7d8083]", art: <svg viewBox="0 0 24 24" className="size-6"><circle cx="12" cy="12" r="12" fill="#fff" /><path d="M4 8.500q2-5 8-5t8 5zM3.500 14h17q-1.500 6.500-8.500 6.500T3.500 14z" fill="#14a5dc" /><ellipse cx="12" cy="11.300" rx="8" ry="3" fill="none" stroke="#14a5dc" strokeWidth="1.600" /></svg> },
  { name: "Chrome プロファイル", mark: "w-[6px] bg-[#7d8083]", art: <span className="relative"><Chrome /><i className="absolute -top-[6px] -right-1 flex size-4 items-center justify-center rounded-full bg-[#7421a8]"><i className="size-1 rounded-full border border-white" /></i></span> },
  { name: "PowerPoint", mark: "w-[6px] bg-[#7d8083]", art: <svg viewBox="0 0 24 24" className="size-6"><circle cx="13" cy="12" r="11" fill="#ed6c47" /><path d="M13 1a11 11 0 0111 11H13z" fill="#ff8f6b" /><rect y="6" width="13" height="13" rx="1" fill="#b83b1d" /><text x="6.500" y="16" textAnchor="middle" fontSize="10" fontWeight="700" fill="#fff">P</text></svg> },
  { name: "Cubase", mark: "w-4 bg-[#2e7d86]", art: <CubaseMark className="size-6" /> },
];

const Taskbar = () => (
  <footer className="flex h-12 shrink-0 items-center bg-[#dfe1e4] text-[11px] text-[#222]">
    <div className="flex flex-1 items-center pl-[18px]">
      <div className="relative h-8 w-8">
        <svg viewBox="0 0 24 24" className="mt-2 size-6"><path d="M5 20a5 5 0 01-.5-10A7 7 0 0118 9a5.500 5.500 0 011 11z" fill="#8db8ee" /></svg>
        <span className="absolute -top-px right-1 flex size-4 items-center justify-center rounded-full bg-[#c02c1f] text-[9px] text-white">9+</span>
      </div>
      <p className="leading-4">29°C<br /><span className="text-[#5c5e60]">くもりのち晴れ</span></p>
    </div>
    <div className="flex items-center pl-3">
      <button type="button" aria-label="スタート" className="mr-[14px] grid size-6 grid-cols-2 gap-px *:bg-[#1789dc]"><i /><i /><i /><i /></button>
      <label className="mr-[3px] flex h-[30px] w-[218px] items-center gap-2 rounded-full border border-[#cfd1d4] bg-[#f6f7f8] pr-1 pl-[10px]">
        <Search className="size-4" />
        <input aria-label="検索" placeholder="検索" className="min-w-0 flex-1 bg-transparent text-xs outline-none placeholder:text-[#5c5e60]" />
        <svg viewBox="0 0 44 24" className="h-6 w-11">
          <path d="M1 3l4 9 4-9" fill="none" stroke="#2bb3dd" strokeWidth="3" /><circle cx="6" cy="16" r="4" fill="#f0a81e" />
          <path d="M14 8l16-7 2 4-16 7z" fill="#d9604c" /><path d="M23 20l12-12 5 1 3 9-8 4H24z" fill="#6aa5a3" /><path d="M24 20h12l7-4" stroke="#e9f1f0" fill="none" />
        </svg>
      </label>
      {apps.map((a) => (
        <button key={a.name} type="button" aria-label={a.name} className={clsx("mx-[2px] flex h-10 w-10 flex-col items-center rounded-[4px] pt-2", a.lit && "bg-[#e8aeae]")}>
          {a.art}
          {a.mark && <i className={clsx("mt-1 h-[3px] shrink-0 rounded-full", a.mark)} />}
        </button>
      ))}
    </div>
    <div className="flex flex-1 items-center justify-end pr-5">
      <span className="flex w-[34px] justify-center"><ChevronUp className="size-4" /></span>
      <span className="flex w-[34px] justify-center"><Mic className="size-[18px] text-[#2c6e6a]" /></span>
      <span className="flex w-[34px] justify-center text-sm text-[#9a9c9e]">A</span>
      <span className="flex w-[34px] justify-center"><i className="relative size-[15px] rounded-full bg-[#1a6fe0]"><i className="absolute -right-px -bottom-px size-[6px] rounded-full bg-[#e2452f]" /></i></span>
      <span className="ml-[9px] flex gap-[6px]"><Wifi className="size-[17px]" /><Volume2 className="size-[17px]" /></span>
      <time className="ml-4 text-right leading-4">16:42<br />2025/09/13</time>
      <Icon className="ml-[9px] size-4" d="M8 1a5 5 0 015 5v4l2 3H1l2-3V6a5 5 0 015-5zM6 14h4l-2 2zM6 5v1h2L6 9v1h4V9H8l2-3V5z" />
    </div>
  </footer>
);

export default function App() {
  return (
    <div className="flex h-screen min-h-[1000px] flex-col overflow-hidden bg-[#070808] font-['Noto_Sans','Noto_Sans_CJK_JP',sans-serif] [font-feature-settings:'palt'] select-none">
      <header className="relative z-10 shrink-0 bg-[#24272b]">
        <TitleBar />
        <MenuBar />
        <Toolbar />
        <StatusLine />
        <InfoLine />
        <div className="flex h-7 pl-px"><i className="w-3 border border-[#c3c4c5] bg-[#a0a2a4]" /><i className="w-7 bg-[#55585b]" /></div>
      </header>
      <main className="mt-[5px] flex min-h-0 flex-1 gap-1 px-1">
        <ChannelStrip />
        <div className="flex min-w-0 flex-1 flex-col gap-1">
          <div className="flex min-h-0 flex-[420] rounded-lg border-2 border-white bg-[#24272b] p-1">
            <TrackList />
            <div className="mr-px flex w-[2px] flex-col gap-[2px]">
              <i className="flex-[199] bg-[#77797b]" />
              {[0, 1, 2, 3].map((i) => <i key={i} className="h-1 bg-white" />)}
              <i className="flex-[197] bg-[#77797b]" />
            </div>
            <Arrange />
          </div>
          <div className="flex min-h-0 flex-[409] flex-col">
            <Editor />
            <ZoneTabs />
          </div>
        </div>
        <MediaRack />
      </main>
      <Taskbar />
    </div>
  );
}
